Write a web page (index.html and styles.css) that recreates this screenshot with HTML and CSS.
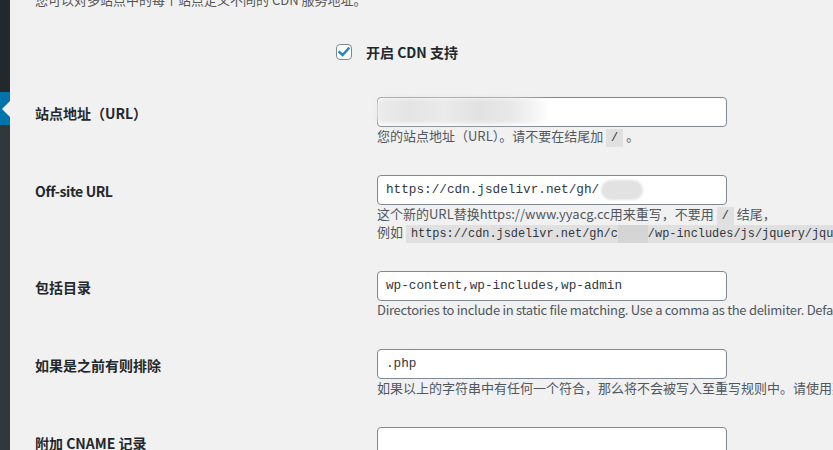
FILE: index.html
```html
<!DOCTYPE html>
<html lang="zh-CN">
<head>
<meta charset="utf-8">
<title>CDN 设置</title>
<link rel="stylesheet" href="styles.css">
</head>
<body>
<div class="page">
  <aside class="sidebar">
    <div class="menu-top"></div>
    <div class="menu-current"><span class="arrow"></span></div>
    <div class="menu-rest"></div>
  </aside>
  <main class="content">
    <p class="intro">您可以对多站点中的每个站点定义不同的 CDN 服务地址。</p>
    <div class="enable-row">
      <span class="checkbox">
        <svg width="12" height="10" viewBox="0 0 12 10"><polyline points="1.5,5.2 4.6,8 10.5,1.5" fill="none" stroke="#1e8cbe" stroke-width="2.4" stroke-linecap="square"/></svg>
      </span>
      <span class="enable-label">开启 CDN 支持</span>
    </div>
    <div class="form">
      <div class="row">
        <div class="label">站点地址（URL）</div>
        <div class="field">
          <div class="input"><span class="blur-wide"></span></div>
          <p class="desc">您的站点地址（URL）。请不要在结尾加 <code>/</code> 。</p>
        </div>
      </div>
      <div class="row">
        <div class="label label-latin">Off-site URL</div>
        <div class="field">
          <div class="input">https://cdn.jsdelivr.net/gh/<span class="blur-blob"></span></div>
          <p class="desc">这个新的URL替换https://www.yyacg.cc用来重写，不要用 <code>/</code> 结尾，</p>
          <p class="desc">例如 <code>https://cdn.jsdelivr.net/gh/c<span class="blur-code"></span>/wp-includes/js/jquery/jquery.js</code></p>
        </div>
      </div>
      <div class="row">
        <div class="label">包括目录</div>
        <div class="field">
          <div class="input">wp-content,wp-includes,wp-admin</div>
          <p class="desc desc-latin">Directories to include in static file matching. Use a comma as the delimiter. Default: wp-content,wp-includes</p>
        </div>
      </div>
      <div class="row">
        <div class="label">如果是之前有则排除</div>
        <div class="field">
          <div class="input">.php</div>
          <p class="desc">如果以上的字符串中有任何一个符合，那么将不会被写入至重写规则中。请使用英文逗号分隔。</p>
        </div>
      </div>
      <div class="row">
        <div class="label">附加 CNAME 记录</div>
        <div class="field">
          <div class="input"></div>
        </div>
      </div>
    </div>
  </main>
</div>
</body>
</html>
```
FILE: styles.css
```css
html, body {
  margin: 0;
  padding: 0;
  height: 100%;
  overflow: hidden;
  background: #f1f1f1;
}
.page {
  display: flex;
  height: 450px;
  font-family: "Noto Sans CJK SC", "Noto Sans", sans-serif;
}
.sidebar {
  width: 10px;
  flex: none;
  display: flex;
  flex-direction: column;
}
.menu-top { height: 92px; background: #23282d; }
.menu-current {
  height: 33px;
  background: #0073aa;
  position: relative;
}
.arrow {
  position: absolute;
  right: 0;
  top: 50%;
  margin-top: -8px;
  width: 0;
  height: 0;
  border-top: 8px solid transparent;
  border-bottom: 8px solid transparent;
  border-right: 8px solid #f1f1f1;
}
.menu-rest { flex: 1; background: #32373c; }
.content {
  flex: 1;
  padding-left: 25px;
  white-space: nowrap;
  overflow: hidden;
}
.intro {
  margin: -9px 0 0;
  height: 18px;
  font-size: 13px;
  line-height: 18px;
  color: #555;
}
.enable-row {
  margin: 28px 0 0 301px;
  height: 30px;
  display: flex;
  align-items: center;
  gap: 14px;
}
.checkbox {
  width: 14px;
  height: 14px;
  border: 1px solid #7e8993;
  border-radius: 4px;
  background: #fff;
  display: flex;
  align-items: center;
  justify-content: center;
}
.enable-label {
  font-size: 14px;
  font-weight: 600;
  color: #23282d;
}
.form {
  margin-top: 30px;
  display: flex;
  flex-direction: column;
  gap: 30px;
}
.row {
  display: flex;
}
.label {
  width: 342px;
  flex: none;
  height: 30px;
  font-size: 14px;
  font-weight: 600;
  line-height: 32px;
  color: #23282d;
}
.label-latin {
  letter-spacing: -0.4px;
}
.field {
  display: flex;
  flex-direction: column;
}
.input {
  position: relative;
  box-sizing: border-box;
  width: 350px;
  height: 30px;
  border: 1px solid #7e8993;
  border-radius: 4px;
  background: #fff;
  padding: 0 8px;
  font-family: "Liberation Mono", monospace;
  font-size: 12.7px;
  line-height: 28px;
  color: #32373c;
}
.blur-wide {
  position: absolute;
  left: -2px;
  top: 0;
  width: 170px;
  height: 26px;
  background: linear-gradient(90deg, #ececec 0%, #e4e4e4 20%, #eaeaea 40%, #e2e2e2 60%, #e8e8e8 80%, rgba(236,236,236,0.2) 100%);
  filter: blur(2px);
  border-radius: 8px;
}
.blur-blob {
  display: inline-block;
  vertical-align: middle;
  width: 42px;
  height: 20px;
  margin-left: 2px;
  border-radius: 10px;
  background: #e2e2e2;
  filter: blur(1px);
}
.desc {
  margin: 0;
  height: 18px;
  font-size: 13px;
  line-height: 18px;
  color: #50575e;
}
.desc-latin {
  letter-spacing: -0.28px;
}
code {
  font-family: "Liberation Mono", monospace;
  font-size: 11.9px;
  line-height: 14px;
  letter-spacing: 0;
  background: rgba(0, 0, 0, 0.07);
  padding: 2px 5px 2px;
  color: #32373c;
}
.blur-code {
  display: inline-block;
  vertical-align: middle;
  width: 30px;
  height: 18px;
  background: #d5d5d5;
}
```
